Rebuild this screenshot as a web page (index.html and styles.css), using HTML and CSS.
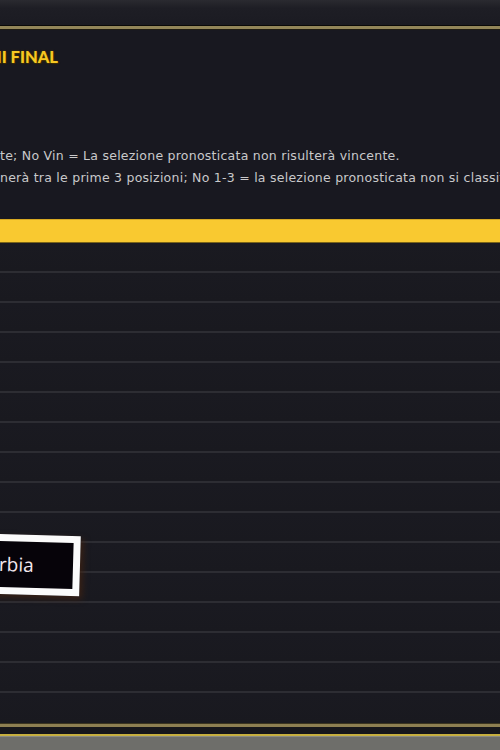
FILE: index.html
```html
<!DOCTYPE html>
<html>
<head>
<meta charset="utf-8">
<link rel="stylesheet" href="styles.css">
</head>
<body>
<div class="page">
  <div class="topbar"></div>
  <div class="gold-line"></div>
  <div class="header">
    <h1 class="title">MI FINAL</h1>
  </div>
  <div class="desc">
    <p class="desc-line">te; No Vin = La selezione pronosticata non risulterà vincente.</p>
    <p class="desc-line">nerà tra le prime 3 posizioni; No 1-3 = la selezione pronosticata non si classificherà</p>
  </div>
  <div class="yellow-bar"></div>
  <div class="rows">
    <div class="row"></div><div class="row"></div><div class="row"></div><div class="row"></div>
    <div class="row"></div><div class="row"></div><div class="row"></div><div class="row"></div>
    <div class="row"></div><div class="row"></div><div class="row"></div><div class="row"></div>
    <div class="row"></div><div class="row"></div><div class="row"></div><div class="row last"></div>
  </div>
  <div class="footer">
    <div class="footer-gold"></div>
    <div class="footer-dark"></div>
    <div class="footer-bright"></div>
    <div class="footer-stone"></div>
  </div>
  <div class="tag"><span class="tag-text">rbia</span></div>
</div>
</body>
</html>
```
FILE: styles.css
```css
html, body {
  margin: 0;
  padding: 0;
  background: #191920;
}
.page {
  position: relative;
  width: 500px;
  height: 750px;
  overflow: hidden;
  display: flex;
  flex-direction: column;
  background: #191921;
  font-family: "DejaVu Sans", "Open Sans", sans-serif;
}
.topbar {
  height: 25px;
  background: linear-gradient(#2a2a30 0px, #1e1e25 8px, #1b1b22 25px);
}
.gold-line {
  height: 5px;
  box-sizing: border-box;
  border-top: 1px solid #0b0a08;
  border-bottom: 1px solid #1e1b12;
  background: #938659;
}
.header {
  height: 68px;
  box-sizing: border-box;
  padding-top: 17px;
  background: #181820;
}
.title {
  margin: 0;
  font-family: "Lato", "Open Sans", sans-serif;
  font-weight: 900;
  font-size: 16.5px;
  line-height: 20px;
  color: #f6c823;
  text-indent: -14px;
  text-shadow: 0 0 2px #5a4200, 1px 1px 1px #3a2a00;
}
.desc {
  height: 121px;
  box-sizing: border-box;
  padding-top: 47px;
  background: #181820;
}
.desc-line {
  margin: 0;
  font-size: 12.5px;
  line-height: 22px;
  letter-spacing: 0.25px;
  color: #c9c9cb;
  white-space: nowrap;
}
.yellow-bar {
  height: 24px;
  box-sizing: border-box;
  background: #f9c930;
  border-top: 1px solid #d8a922;
  border-bottom: 1px solid #7a6419;
}
.rows {
  display: flex;
  flex-direction: column;
}
.row {
  height: 30px;
  box-sizing: border-box;
  border-bottom: 2px solid #2d2d33;
  background: linear-gradient(#1a1a21, #19191f);
}
.row.last {
  border-bottom: none;
}
.footer {
  display: flex;
  flex-direction: column;
  flex: 1;
}
.footer-gold {
  height: 3px;
  background: #8d7f52;
  border-top: 1px solid #3a3420;
}
.footer-dark {
  height: 7px;
  background: #16161b;
}
.footer-bright {
  height: 2px;
  background: #c7af3f;
}
.footer-stone {
  flex: 1;
  background: #6e6e6a;
  border-top: 1px solid #8a8a84;
}
.tag {
  position: absolute;
  left: -12px;
  top: 535px;
  width: 78px;
  height: 46px;
  border: 7px solid #fbfbfb;
  background: #060309;
  transform: rotate(1.6deg);
  box-shadow: 3px 3px 6px rgba(70, 35, 15, 0.7);
  display: flex;
  align-items: center;
}
.tag-text {
  margin-left: 4px;
  font-size: 19px;
  color: #f3e8ee;
  font-family: "Open Sans", sans-serif;
}
```
